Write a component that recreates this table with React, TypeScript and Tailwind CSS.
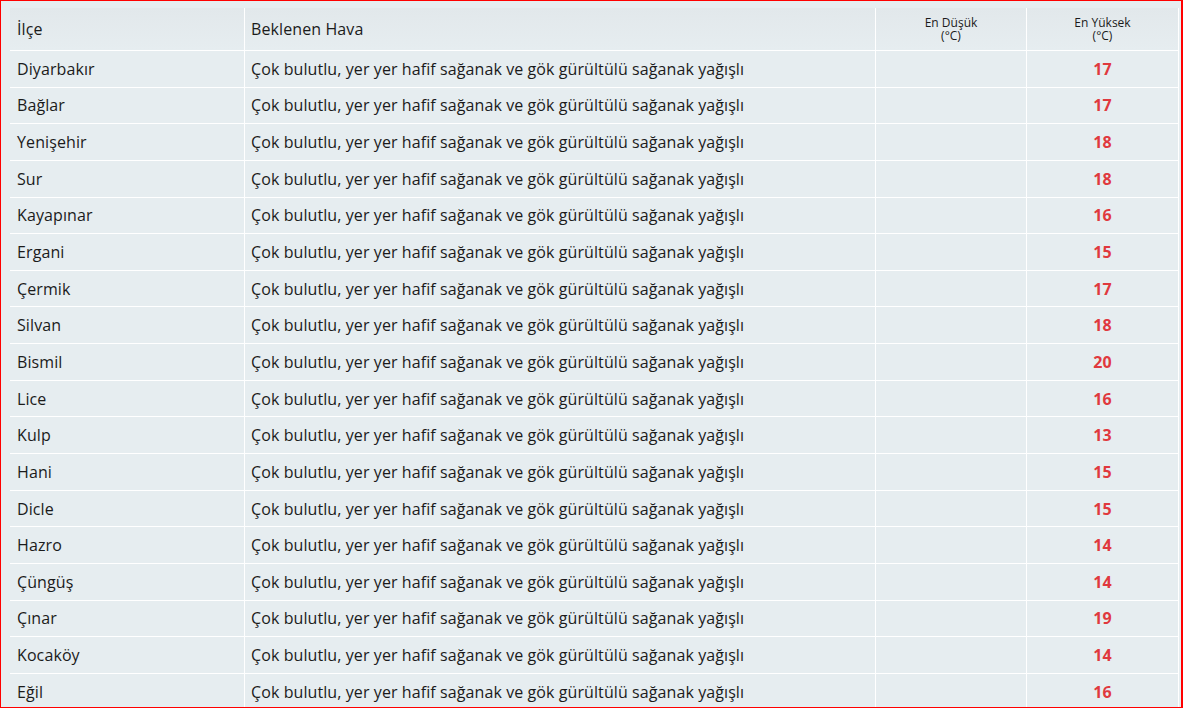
import React from "react";

const desc = "Çok bulutlu, yer yer hafif sağanak ve gök gürültülü sağanak yağışlı";

const rows = [
  { ilce: "Diyarbakır", max: 17 },
  { ilce: "Bağlar", max: 17 },
  { ilce: "Yenişehir", max: 18 },
  { ilce: "Sur", max: 18 },
  { ilce: "Kayapınar", max: 16 },
  { ilce: "Ergani", max: 15 },
  { ilce: "Çermik", max: 17 },
  { ilce: "Silvan", max: 18 },
  { ilce: "Bismil", max: 20 },
  { ilce: "Lice", max: 16 },
  { ilce: "Kulp", max: 13 },
  { ilce: "Hani", max: 15 },
  { ilce: "Dicle", max: 15 },
  { ilce: "Hazro", max: 14 },
  { ilce: "Çüngüş", max: 14 },
  { ilce: "Çınar", max: 19 },
  { ilce: "Kocaköy", max: 14 },
  { ilce: "Eğil", max: 16 },
];

export default function App() {
  return (
    <div
      className="h-[708px] w-[1183px] overflow-hidden border-t border-b border-l border-r-2 border-[#ff0000] bg-[#e6edf0] pl-[9px] pt-[7px] text-[#1b1b1b]"
      style={{ fontFamily: '"Open Sans", "Noto Sans", sans-serif' }}
    >
      <div className="w-[1169px]">
        {/* başlık */}
        <div className="flex h-[43px] border-b border-white bg-gradient-to-b from-[#e2e8eb] to-[#e6edf0]">
          <div className="flex w-[234px] items-center px-[7px] text-[16px] tracking-[0.1px]">
            İlçe
          </div>
          <div className="flex w-[631px] items-center border-l border-white px-[6px] text-[16px] tracking-[0.1px]">
            Beklenen Hava
          </div>
          <div className="flex w-[151px] flex-col items-center justify-center border-l border-white text-[12px] leading-[13px]">
            <span>En Düşük</span>
            <span>(°C)</span>
          </div>
          <div className="flex w-[153px] flex-col items-center justify-center border-l border-r border-white text-[12px] leading-[13px]">
            <span>En Yüksek</span>
            <span>(°C)</span>
          </div>
        </div>

        {rows.map((r, i) => (
          <div key={i} className="flex h-[36.65px] border-b border-white">
            <div className="flex w-[234px] items-center px-[7px] text-[16px] tracking-[0.1px]">
              {r.ilce}
            </div>
            <div className="flex w-[631px] items-center border-l border-white px-[6px] text-[16px] tracking-[0.09px]">
              {desc}
            </div>
            <div className="w-[151px] border-l border-white" />
            <div className="flex w-[153px] items-center justify-center border-l border-r border-white text-[16px] font-bold text-[#e0393e]">
              {r.max}
            </div>
          </div>
        ))}
      </div>
    </div>
  );
}
